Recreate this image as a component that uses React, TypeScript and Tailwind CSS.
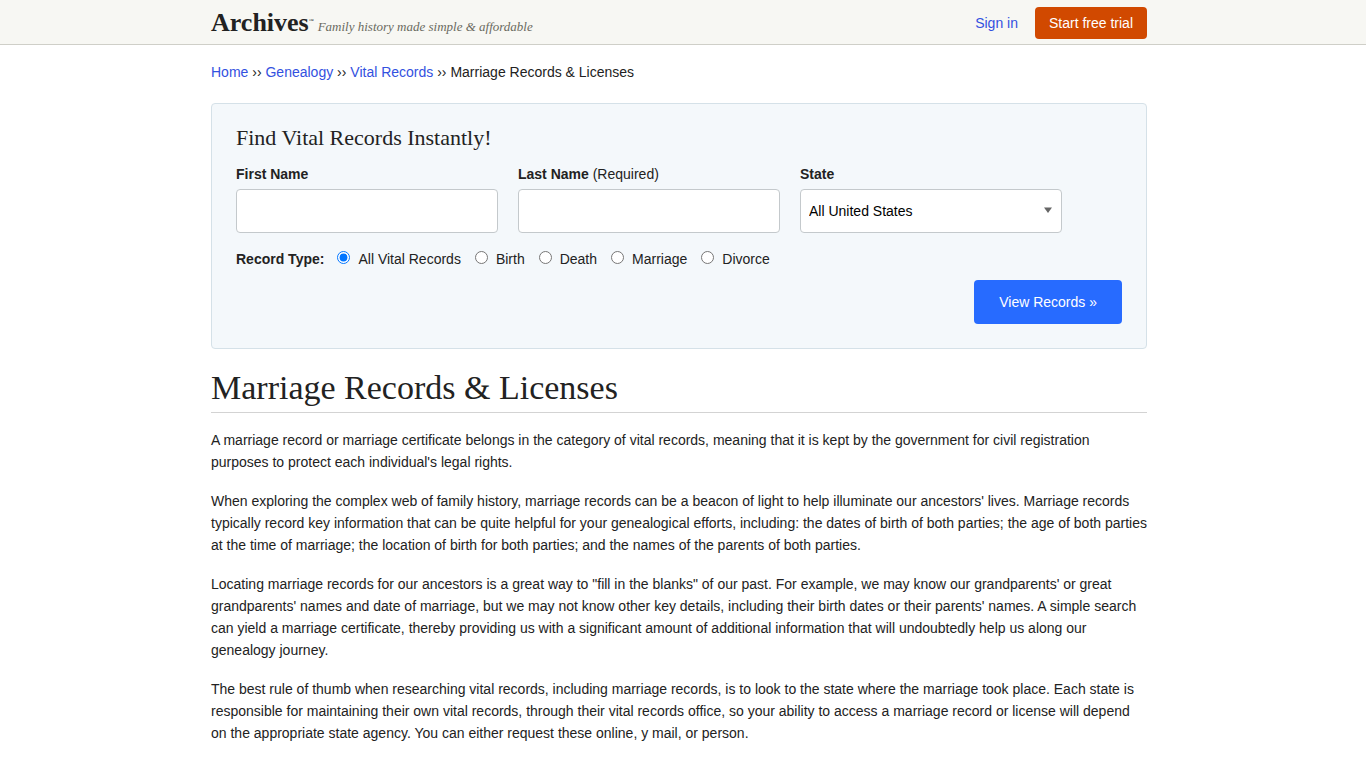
import { useState } from "react";

const crumbs = ["Home", "Genealogy", "Vital Records"];

const recordTypes = ["All Vital Records", "Birth", "Death", "Marriage", "Divorce"];

const paragraphs = [
  "A marriage record or marriage certificate belongs in the category of vital records, meaning that it is kept by the government for civil registration purposes to protect each individual's legal rights.",
  "When exploring the complex web of family history, marriage records can be a beacon of light to help illuminate our ancestors' lives. Marriage records typically record key information that can be quite helpful for your genealogical efforts, including: the dates of birth of both parties; the age of both parties at the time of marriage; the location of birth for both parties; and the names of the parents of both parties.",
  "Locating marriage records for our ancestors is a great way to \"fill in the blanks\" of our past. For example, we may know our grandparents' or great grandparents' names and date of marriage, but we may not know other key details, including their birth dates or their parents' names. A simple search can yield a marriage certificate, thereby providing us with a significant amount of additional information that will undoubtedly help us along our genealogy journey.",
  "The best rule of thumb when researching vital records, including marriage records, is to look to the state where the marriage took place. Each state is responsible for maintaining their own vital records, through their vital records office, so your ability to access a marriage record or license will depend on the appropriate state agency. You can either request these online, y mail, or person.",
];

const Header = () => {
  return (
    <header className="border-b border-[#cfcfc8] bg-[#f7f7f3] pr-2">
      <div className="mx-auto flex h-11 max-w-[936px] items-center justify-between pt-[2px]">
        <a href="#" className="flex items-baseline font-['Liberation_Serif',serif]">
          <span className="text-[26px] leading-8 font-bold text-[#222]">Archives</span>
          <span className="mr-1 self-start pt-2 text-[5px] leading-3 text-[#222]">™</span>
          <span className="text-[13px] leading-5 text-[#6a6a60] italic">
            Family history made simple &amp; affordable
          </span>
        </a>
        <div className="flex items-center gap-[17px]">
          <a href="#" className="text-[#3351e0]">
            Sign in
          </a>
          <a
            href="#"
            className="flex h-8 items-center rounded-sm bg-[#d14900] px-[14px] text-white"
          >
            Start free trial
          </a>
        </div>
      </div>
    </header>
  );
};

const SearchForm = () => {
  const [type, setType] = useState(recordTypes[0]);

  return (
    <form
      className="mt-[21px] rounded-sm border border-[#d5e1e8] bg-[#f4f8fb] p-6"
      onSubmit={(e) => e.preventDefault()}
    >
      <h2 className="font-['Liberation_Serif',serif] text-[22px] leading-5">
        Find Vital Records Instantly!
      </h2>
      <div className="mt-4 flex flex-wrap gap-5">
        <div className="w-[262px]">
          <label htmlFor="first-name" className="block pb-[5px] font-bold">
            First Name
          </label>
          <input
            id="first-name"
            type="text"
            className="block h-11 w-full rounded-sm border border-[#c4c9cc] bg-white px-2"
          />
        </div>
        <div className="w-[262px]">
          <label htmlFor="last-name" className="block pb-[5px]">
            <b>Last Name</b> (Required)
          </label>
          <input
            id="last-name"
            type="text"
            className="block h-11 w-full rounded-sm border border-[#c4c9cc] bg-white px-2"
          />
        </div>
        <div className="w-[262px]">
          <label htmlFor="state" className="block pb-[5px] font-bold">
            State
          </label>
          <div className="relative">
            <select
              id="state"
              className="block h-11 w-full appearance-none rounded-sm border border-[#c4c9cc] bg-white px-2 text-black"
            >
              <option>All United States</option>
            </select>
            <svg
              className="pointer-events-none absolute top-[18px] right-[10px] h-[6px] w-2"
              viewBox="0 0 8 6"
              fill="#666"
            >
              <path d="M0 0.5h8L4 6z" />
            </svg>
          </div>
        </div>
      </div>
      <div className="mt-4 flex flex-wrap items-center" role="radiogroup" aria-labelledby="type">
        <b id="type" className="mr-[13px]">
          Record Type:
        </b>
        {recordTypes.map((name) => (
          <label key={name} className="mr-[14px] flex">
            <input
              type="radio"
              name="type"
              value={name}
              checked={type === name}
              onChange={() => setType(name)}
              className="mt-[2px] mr-2 h-[13px] w-[13px]"
            />
            {name}
          </label>
        ))}
      </div>
      <div className="mt-[11px] flex justify-end">
        <button
          type="submit"
          className="h-11 rounded-sm bg-[#276bff] px-[25px] text-white"
        >
          View Records »
        </button>
      </div>
    </form>
  );
};

const App = () => {
  return (
    <div className="min-h-screen bg-white font-['Liberation_Sans',Arial,sans-serif] text-[14px] leading-5 text-[#222]">
      <Header />
      <main className="pr-2">
        <div className="mx-auto max-w-[936px] pt-[17px]">
          <nav>
            {crumbs.map((crumb) => (
              <span key={crumb}>
                <a href="#" className="text-[#3351e0]">
                  {crumb}
                </a>
                {" ›› "}
              </span>
            ))}
            Marriage Records &amp; Licenses
          </nav>
          <SearchForm />
          <h1 className="mt-[19px] border-b border-[#d3d3d3] pb-1 font-['Liberation_Serif',serif] text-[34px] leading-10">
            Marriage Records &amp; Licenses
          </h1>
          <div className="mt-4 flex flex-col gap-[17px] leading-[22px]">
            {paragraphs.map((text) => (
              <p key={text}>{text}</p>
            ))}
          </div>
        </div>
      </main>
    </div>
  );
};

export default App;
